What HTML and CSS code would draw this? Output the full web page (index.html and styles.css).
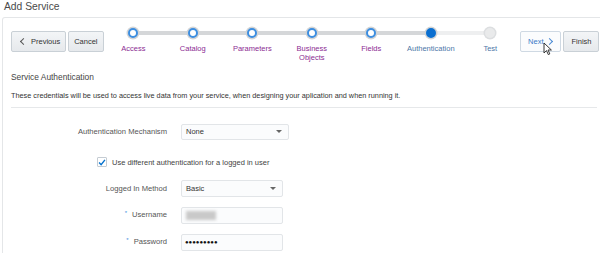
FILE: index.html
```html
<!DOCTYPE html>
<html lang="en">
<head>
  <meta charset="UTF-8" />
  <title>Add Service</title>
  <link rel="stylesheet" href="styles.css">
</head>
<body>

  <div class="page-title">Add Service</div>

  <div class="panel">
    <div class="toolbar">
      <div class="btn-group">
        <button class="btn"><span class="chev-left"></span>Previous</button>
        <button class="btn">Cancel</button>
      </div>

      <ol class="train">
        <li class="step visited"><span class="node"></span><span class="label">Access</span></li>
        <li class="step visited"><span class="node"></span><span class="label">Catalog</span></li>
        <li class="step visited"><span class="node"></span><span class="label">Parameters</span></li>
        <li class="step visited"><span class="node"></span><span class="label">Business<br>Objects</span></li>
        <li class="step visited"><span class="node"></span><span class="label">Fields</span></li>
        <li class="step current"><span class="node"></span><span class="label">Authentication</span></li>
        <li class="step todo"><span class="node"></span><span class="label">Test</span></li>
      </ol>

      <div class="btn-group">
        <button class="btn btn-next">Next<span class="chev-right"></span>
          <svg class="cursor" width="10" height="14" viewBox="0 0 10 14">
            <path d="M1 1 L1 11 L3.5 8.6 L5.3 12.6 L6.8 11.9 L5 8 L8.4 8 Z" fill="#fff" stroke="#222" stroke-width="0.9" stroke-linejoin="round"/>
          </svg>
        </button>
        <button class="btn btn-finish">Finish</button>
      </div>
    </div>

    <h2 class="section-title">Service Authentication</h2>
    <p class="section-desc">These credentials will be used to access live data from your service, when designing your aplication and when running it.</p>
    <hr class="divider">

    <div class="form">
      <label class="form-label">Authentication Mechanism</label>
      <div class="select wide">None<span class="caret"></span></div>

      <div class="check-row">
        <span class="checkbox">
          <svg width="9" height="9" viewBox="0 0 9 9"><path d="M1.2 4.6 L3.5 6.9 L7.8 1.6" fill="none" stroke="#0572ce" stroke-width="1.6"/></svg>
        </span>
        Use different authentication for a logged in user
      </div>

      <label class="form-label">Logged In Method</label>
      <div class="select">Basic<span class="caret"></span></div>

      <label class="form-label"><span class="req">*</span>Username</label>
      <div class="input"><span class="blurred"></span></div>

      <label class="form-label"><span class="req">*</span>Password</label>
      <div class="input dots">&#9679;&#9679;&#9679;&#9679;&#9679;&#9679;&#9679;&#9679;&#9679;</div>
    </div>
  </div>

</body>
</html>
```

FILE: styles.css
```css
* {
  margin: 0;
  padding: 0;
  box-sizing: border-box;
  font-family: 'Liberation Sans', Arial, sans-serif;
}

body {
  background: #ffffff;
  color: #333333;
  overflow: hidden;
  width: 600px;
  height: 253px;
}

.page-title {
  font-size: 10.3px;
  line-height: 14px;
  padding-left: 4px;
  color: #4a4a4a;
}

/* Panel */
.panel {
  margin: 3px 0 0 2px;
  width: 620px;
  height: 236px;
  border: 1px solid #e4e6e8;
  border-bottom: none;
  border-radius: 3px 3px 0 0;
  padding: 13px 0 0 8px;
}

.toolbar {
  display: flex;
  align-items: flex-start;
}

.btn-group {
  display: flex;
  gap: 2px;
}

.btn {
  height: 21px;
  padding: 0 5px;
  font-size: 7.5px;
  color: #333;
  background: linear-gradient(#f3f5f7, #e6e9ec);
  border: 1px solid #c9d0d6;
  border-radius: 2px;
  display: flex;
  align-items: center;
  gap: 5px;
}

.chev-left,
.chev-right {
  display: inline-block;
  width: 5px;
  height: 5px;
  border-left: 1.2px solid #555;
  border-bottom: 1.2px solid #555;
}

.chev-left {
  transform: rotate(45deg);
  margin-left: 4px;
}

.chev-right {
  transform: rotate(-135deg);
  border-color: #4a8ad4;
  margin-left: -1px;
}

.btn-next {
  position: relative;
  background: #fbfcfd;
  color: #3a7bc8;
  border-color: #cfd9e3;
  padding: 0 8px 0 7px;
}

.btn-finish {
  padding: 0 7px;
}

.cursor {
  position: absolute;
  left: 22px;
  top: 10px;
}

/* Train */
.train {
  list-style: none;
  display: flex;
}

.step {
  position: relative;
  width: 59.5px;
  display: flex;
  flex-direction: column;
  align-items: center;
  font-size: 7.5px;
  line-height: 9px;
  text-align: center;
}

.step::after {
  content: "";
  position: absolute;
  top: 0;
  left: 50%;
  width: 100%;
  height: 4px;
  background: #d5d7d9;
  z-index: 0;
}

.step.current::after {
  background: #eeeff0;
}

.step.todo::after {
  display: none;
}

.node {
  position: relative;
  z-index: 1;
  width: 10px;
  height: 10px;
  margin-top: -3px;
  border-radius: 50%;
  background: #ffffff;
  border: 2px solid #3d8ee0;
  box-shadow: 0 0 0 1.5px #d2d4d6;
}

.current .node {
  background: #0b6fd0;
  border-color: #0b6fd0;
}

.todo .node {
  background: #e9eaeb;
  border-color: #e9eaeb;
  box-shadow: 0 0 0 1.5px #dcdee0;
}

.label {
  margin-top: 6px;
  white-space: nowrap;
}

.visited .label {
  color: #8b2b93;
}

.current .label,
.todo .label {
  color: #4d77a8;
}

/* Section */
.section-title {
  font-size: 8.4px;
  font-weight: normal;
  line-height: 12px;
  margin-top: 9px;
  color: #444;
}

.section-desc {
  font-size: 7.3px;
  line-height: 10px;
  margin-top: 8px;
  color: #333;
}

.divider {
  border: none;
  border-top: 1px solid #e6e8ea;
  width: 586px;
  margin-top: 6px;
}

/* Form */
.form {
  display: grid;
  grid-template-columns: 156px auto;
  column-gap: 14px;
  row-gap: 9px;
  align-items: center;
  margin-top: 15px;
}

.form-label {
  font-size: 7.6px;
  color: #555;
  text-align: right;
  line-height: 17px;
}

.req {
  color: #3d8ee0;
  font-size: 6px;
  margin-right: 5px;
  position: relative;
  top: -2px;
}

.select,
.input {
  height: 17px;
  width: 102px;
  border: 1px solid #e2e5e8;
  border-radius: 2px;
  background: #fbfcfd;
  font-size: 7.5px;
  padding-left: 4px;
  display: flex;
  align-items: center;
  justify-content: space-between;
}

.select.wide {
  width: 108px;
  height: 16px;
}

.caret {
  width: 0;
  height: 0;
  border-left: 3px solid transparent;
  border-right: 3px solid transparent;
  border-top: 3.5px solid #666;
  margin-right: 6px;
}

.check-row {
  grid-column: 1 / 3;
  display: flex;
  align-items: center;
  gap: 5px;
  font-size: 7.5px;
  color: #444;
  padding-left: 86px;
  margin: 8px 0 4px;
}

.checkbox {
  width: 10px;
  height: 10px;
  border: 1px solid #c5ccd3;
  border-radius: 1px;
  background: #fff;
  display: flex;
  align-items: center;
  justify-content: center;
}

.blurred {
  width: 30px;
  height: 9px;
  background: #c9c9c9;
  filter: blur(1.5px);
}

.dots {
  font-size: 6px;
  color: #111;
  justify-content: flex-start;
  padding-left: 3px;
}
```
